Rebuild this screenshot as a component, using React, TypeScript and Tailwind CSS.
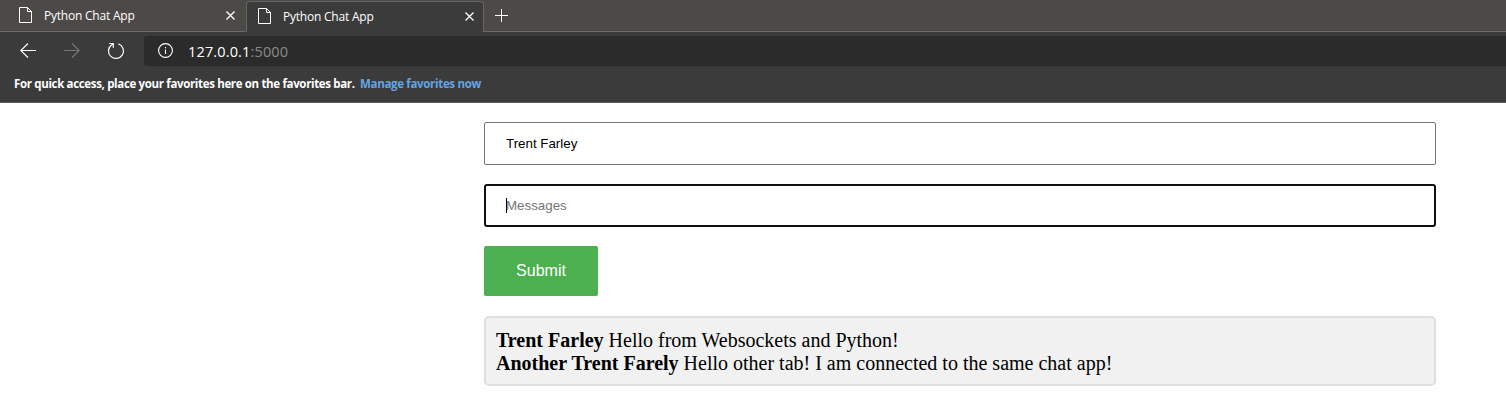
const PageIcon = () => (
  <svg className="mb-px" width="14" height="17" viewBox="0 0 14 17" fill="none" stroke="#fff" strokeWidth="1">
    <path d="M.5 .5h8l4 4v11h-12z" />
    <path d="M8.5 .5v4h4" />
  </svg>
);

const CloseIcon = () => (
  <svg width="9" height="9" viewBox="0 0 9 9" fill="none" stroke="#fff" strokeWidth="1.3">
    <path d="M.5 .5l8 8M8.5 .5l-8 8" />
  </svg>
);

function Tab({ active = false }: { active?: boolean }) {
  return (
    <div
      className={
        active
          ? "ml-px mt-px flex h-[31px] w-[238px] items-center rounded-t-[4px] border border-b-0 border-[#656563] bg-[#3b3b3b] pb-px pl-[11px] pr-[9px]"
          : "flex h-8 w-[245px] items-center border-b border-[#6c6b69] pl-[19px] pr-[10px]"
      }
    >
      <PageIcon />
      <span className="ml-[11px] flex-1 whitespace-nowrap pt-px text-[12px] leading-4 tracking-[-0.22px] text-white">Python Chat App</span>
      <CloseIcon />
    </div>
  );
}

export default function App() {
  return (
    <div className="h-[420px] w-full overflow-hidden bg-white font-['Liberation_Sans',sans-serif]">
      <header className="font-['Open_Sans',sans-serif]">
        <div className="flex h-8 bg-[#4b4a47]">
          <Tab />
          <Tab active />
          <div className="flex flex-1 items-center border-b border-[#6c6b69] pl-[11px]">
            <svg width="14" height="14" viewBox="0 0 14 14" fill="none" stroke="#fff">
              <path d="M6.5 0v13M0 6.5h13" />
            </svg>
          </div>
        </div>
        <div className="flex h-9 items-center bg-[#3b3b3b] pt-0.5">
          <svg className="ml-5 shrink-0" width="16" height="16" viewBox="0 0 16 16" fill="none" stroke="#fff" strokeWidth="1.1">
            <path d="M16 7.5H.8M8 .5l-7.2 7 7.2 7" />
          </svg>
          <svg className="ml-[28px] shrink-0" width="16" height="16" viewBox="0 0 16 16" fill="none" stroke="#777" strokeWidth="1.1">
            <path d="M0 7.5h15.2M8 .5l7.2 7-7.2 7" />
          </svg>
          <svg className="ml-[27px] shrink-0" width="18" height="18" viewBox="0 0 18 18" fill="none" stroke="#fff" strokeWidth="1.2">
            <path d="M11.5 1.9a7.5 7.5 0 1 1-6.8.9L6.3 1.5M2.3 1.5h4v4.2" />
          </svg>
          <div className="ml-[19px] flex h-[30px] flex-1 items-center rounded-l-[3px] bg-[#2b2b2b] pl-[14px]">
            <svg width="16" height="16" viewBox="0 0 16 16" fill="none" stroke="#fff" strokeWidth="1.1">
              <circle cx="7.5" cy="7.5" r="6.9" />
              <path d="M7.5 6.5V11M7.5 4v1.3" />
            </svg>
            <span className="ml-[14px] pt-px text-[14.5px] leading-5 tracking-[0.15px] text-white">
              127.0.0.1<span className="text-[#8c8c8a]">:5000</span>
            </span>
          </div>
        </div>
        <div className="flex h-[35px] items-center whitespace-nowrap border-b border-[#5c5c5c] bg-[#3b3b3b] pb-[3px] pl-[14px] text-[11.5px] font-bold leading-4">
          <span className="w-[346px] tracking-[-0.34px] text-white">For quick access, place your favorites here on the favorites bar.</span>
          <span className="tracking-[-0.32px] text-[#63a5e3]">Manage favorites now</span>
        </div>
      </header>
      <main className="ml-[484px] w-[952px] pt-[19px]">
        <input
          readOnly
          value="Trent Farley"
          className="block h-[43px] w-full rounded-[2px] border border-[#767676] px-[21px] text-[13.333px] text-black outline-none"
        />
        <div className="mt-[19px] flex h-[43px] items-center rounded-[3px] border-2 border-[#101010] pl-5 text-[13.333px] text-[#757575]">
          <span className="-mr-px h-[15px] w-px bg-black" />
          <span>Messages</span>
        </div>
        <button className="mt-[19px] block h-[50px] w-[114px] rounded-[2px] bg-[#4caf50] text-[16px] text-white">Submit</button>
        <div className="mt-5 h-[70px] rounded-[5px] border-2 border-[#dedede] bg-[#f1f1f1] px-[10px] pt-[11px] font-['Liberation_Serif',serif] text-[20px] leading-[23px] text-black">
          <p><b>Trent Farley</b> Hello from Websockets and Python!</p>
          <p><b>Another Trent Farely</b> Hello other tab! I am connected to the same chat app!</p>
        </div>
      </main>
    </div>
  );
}
